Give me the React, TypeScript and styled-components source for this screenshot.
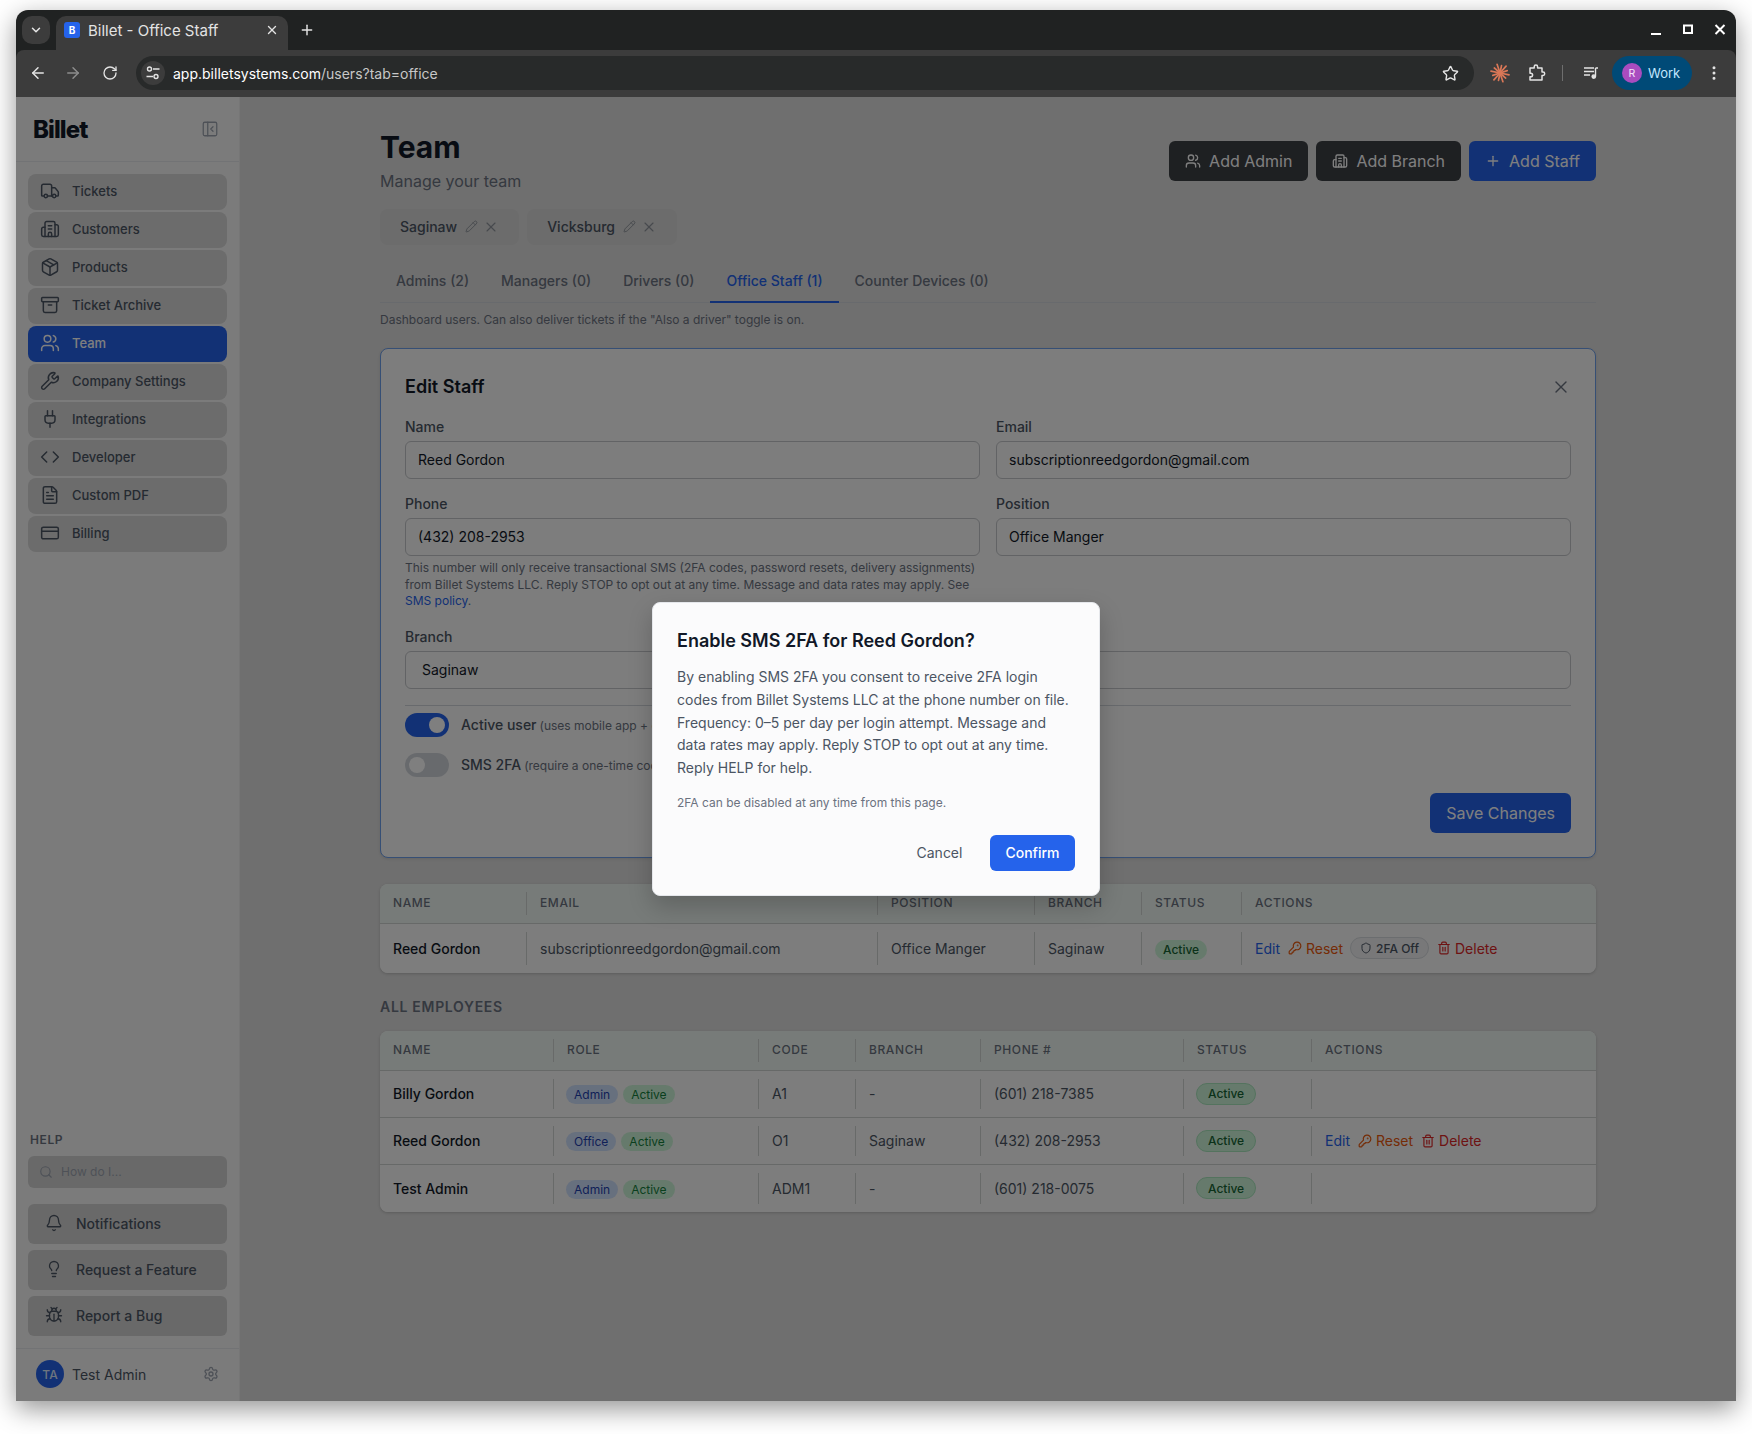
import React from "react";
import styled, { createGlobalStyle } from "styled-components";
import {
  Truck, Building2, Package, Archive, Users, Wrench, Plug, Code, FileText, CreditCard,
  Bell, Lightbulb, Bug, Search, Settings, Pencil, X, Plus, KeyRound, Shield, Trash2,
  PanelLeftClose, ArrowLeft, ArrowRight, RotateCw, Star, ChevronDown, EllipsisVertical,
} from "lucide-react";

const Global = createGlobalStyle`
  html, body { margin: 0; padding: 0; background: #fff; }
  body { font-family: Inter, "Liberation Sans", sans-serif; width: 1752px; height: 1434px; overflow: hidden; }
  * { box-sizing: border-box; }
`;

const Stage = styled.div`
  padding: 10px 16px 33px;
  width: 1752px;
  height: 1434px;
`;
const Win = styled.div`
  width: 1720px;
  height: 1391px;
  display: flex;
  flex-direction: column;
  border-radius: 12px 12px 0 0;
  box-shadow: 0 8px 26px rgba(0, 0, 0, 0.42);
  background: #202222;
  overflow: hidden;
`;
const TabStrip = styled.div`
  height: 40px;
  flex: none;
  display: flex;
  align-items: flex-end;
  padding-left: 6px;
  color: #e3e3e3;
`;
const TabList = styled.div`
  width: 28px;
  height: 28px;
  margin-bottom: 6px;
  border-radius: 10px;
  background: #3c3c3c;
  display: flex;
  align-items: center;
  justify-content: center;
`;
const Tab = styled.div`
  width: 232px;
  height: 34px;
  margin-left: 6px;
  border-radius: 10px 10px 0 0;
  background: #3c3c3c;
  display: flex;
  align-items: center;
  padding: 0 9px 6px 8px;
  font-size: 15px;
`;
const Favicon = styled.span`
  width: 16px;
  height: 16px;
  border-radius: 3px;
  background: #2563eb;
  color: #fff;
  font-size: 10px;
  font-weight: 700;
  display: flex;
  align-items: center;
  justify-content: center;
`;
const TabTitle = styled.span`
  flex: 1;
  margin-left: 8px;
`;
const NewTab = styled.span`
  display: flex;
  margin: 0 0 6px 11px;
  height: 28px;
  align-items: center;
`;
const WinControls = styled.div`
  margin-left: auto;
  height: 40px;
  display: flex;
  align-items: center;
  gap: 16px;
  padding-right: 8px;
`;
const WinBtn = styled.span`
  width: 16px;
  display: flex;
  justify-content: center;
  align-items: center;
`;
const Toolbar = styled.div`
  height: 47px;
  flex: none;
  background: #3c3c3c;
  border-radius: 8px 8px 0 0;
  display: flex;
  align-items: center;
  padding: 0 0 1px 13px;
  color: #e3e3e3;
`;
const NavBtn = styled.span<{ $dim?: boolean; $mr: number }>`
  width: 18px;
  display: flex;
  justify-content: center;
  margin-right: ${(p) => p.$mr}px;
  color: ${(p) => (p.$dim ? "#8c8c8c" : "#e3e3e3")};
`;
const Omnibox = styled.div`
  width: 1338px;
  height: 34px;
  border-radius: 17px;
  background: #282a2a;
  display: flex;
  align-items: center;
  padding: 0 15px 0 5px;
`;
const InfoChip = styled.span`
  width: 24px;
  height: 24px;
  border-radius: 50%;
  background: #3c3c3c;
  display: flex;
  align-items: center;
  justify-content: center;
`;
const Url = styled.span`
  margin-left: 8px;
  flex: 1;
  font-size: 14px;
  color: #fff;
`;
const UrlRest = styled.span`
  color: #c7c7c7;
`;
const ToolIcons = styled.div`
  flex: 1;
  display: flex;
  align-items: center;
`;
const ToolIcon = styled.span<{ $ml: number }>`
  display: flex;
  margin-left: ${(p) => p.$ml}px;
`;
const Sep = styled.span`
  width: 1px;
  height: 16px;
  background: #6e6e6e;
  margin-left: 16px;
`;
const ProfilePill = styled.div`
  margin-left: 13px;
  width: 80px;
  height: 34px;
  border-radius: 17px;
  background: #004a77;
  display: flex;
  align-items: center;
  padding-left: 10px;
  gap: 6px;
  font-size: 13px;
  color: #c2e7ff;
`;
const ProfileDot = styled.span`
  width: 20px;
  height: 20px;
  border-radius: 50%;
  background: #a94cbf;
  color: #f5e3fa;
  font-size: 10.5px;
  display: flex;
  align-items: center;
  justify-content: center;
`;

const Viewport = styled.div`
  position: relative;
  flex: 1;
  min-height: 0;
  display: flex;
  background: #dedede;
`;
const Sidebar = styled.aside`
  width: 224px;
  flex: none;
  background: #f7f7f7;
  border-right: 1px solid #ececec;
  display: flex;
  flex-direction: column;
`;
const SideHead = styled.div`
  height: 65px;
  flex: none;
  border-bottom: 1px solid #e5e7eb;
  display: flex;
  align-items: center;
  justify-content: space-between;
  padding: 0 20px 0 17px;
`;
const Logo = styled.span`
  font-size: 24px;
  font-weight: 800;
  letter-spacing: -0.9px;
  color: #111827;
`;
const SideNav = styled.nav`
  padding: 12px 12px 0;
  display: flex;
  flex-direction: column;
  gap: 2px;
`;
const NavItem = styled.div<{ $active?: boolean }>`
  height: 36px;
  border-radius: 8px;
  display: flex;
  align-items: center;
  gap: 12px;
  padding: 0 0 2px 12px;
  font-size: 13px;
  font-weight: 500;
  background: ${(p) => (p.$active ? "#2563eb" : "#d8d8d8")};
  color: ${(p) => (p.$active ? "#fff" : "#4b5563")};
`;
const HelpBlock = styled.div`
  margin-top: auto;
  padding: 0 12px 12px;
  display: flex;
  flex-direction: column;
`;
const HelpLabel = styled.div`
  font-size: 12px;
  line-height: 16px;
  font-weight: 600;
  letter-spacing: 0.6px;
  color: #6b7280;
  padding-left: 2px;
  margin-bottom: 8px;
`;
const HelpSearch = styled.div`
  height: 32px;
  border-radius: 6px;
  background: #d3d3d3;
  display: flex;
  align-items: center;
  gap: 8px;
  padding: 0 0 1px 11px;
  font-size: 12px;
  color: #9ca3af;
  margin-bottom: 16px;
`;
const HelpButtons = styled.div`
  display: flex;
  flex-direction: column;
  gap: 6px;
`;
const HelpButton = styled.div`
  height: 40px;
  border-radius: 6px;
  background: #d3d3d3;
  display: flex;
  align-items: center;
  gap: 13px;
  padding: 0 0 2px 17px;
  font-size: 14px;
  font-weight: 500;
  color: #4b5563;
`;
const UserRow = styled.div`
  height: 53px;
  flex: none;
  border-top: 1px solid #e5e7eb;
  display: flex;
  align-items: center;
  padding: 0 20px 2px 20px;
  font-size: 14px;
  color: #4b5563;
`;
const Avatar = styled.span`
  width: 28px;
  height: 28px;
  border-radius: 50%;
  background: #2563eb;
  color: #dbeafe;
  font-size: 12px;
  font-weight: 500;
  display: flex;
  align-items: center;
  justify-content: center;
  margin-right: 8px;
`;
const UserName = styled.span`
  flex: 1;
`;

const Main = styled.main`
  flex: 1;
  min-width: 0;
  padding-top: 32px;
`;
const Content = styled.div`
  width: 1216px;
  margin: 0 auto;
`;
const PageHead = styled.header`
  display: flex;
  align-items: center;
  justify-content: space-between;
  margin-bottom: 16px;
`;
const Title = styled.h1`
  margin: 0;
  font-size: 30px;
  line-height: 36px;
  font-weight: 700;
  color: #111827;
`;
const Subtitle = styled.p`
  margin: 4px 0 0;
  font-size: 16px;
  line-height: 24px;
  color: #6b7280;
`;
const HeadButtons = styled.div`
  display: flex;
  gap: 8px;
`;
const HeadButton = styled.button<{ $primary?: boolean }>`
  height: 40px;
  border: 0;
  border-radius: 6px;
  padding: 0 16px;
  display: flex;
  align-items: center;
  gap: 8px;
  font: 400 16px Inter, sans-serif;
  color: #fff;
  background: ${(p) => (p.$primary ? "#2563eb" : "#3d4045")};
`;
const Chips = styled.div`
  display: flex;
  gap: 8px;
  margin-bottom: 14px;
`;
const Chip = styled.div`
  height: 36px;
  border-radius: 8px;
  background: #d8d8d8;
  display: flex;
  align-items: center;
  padding: 0 20px 1px 20px;
  font-size: 14px;
  font-weight: 500;
  color: #4b5563;
`;
const ChipTools = styled.span`
  display: flex;
  align-items: center;
  gap: 5px;
  margin-left: 8px;
  color: #8e939b;
`;
const TabsRow = styled.div`
  display: flex;
  border-bottom: 1px solid #d1d5db;
`;
const PageTab = styled.div<{ $active?: boolean }>`
  padding: 12px 16px 10px;
  font-size: 14px;
  line-height: 20px;
  font-weight: 500;
  margin-bottom: -1px;
  border-bottom: 2px solid ${(p) => (p.$active ? "#2563eb" : "transparent")};
  color: ${(p) => (p.$active ? "#2563eb" : "#6b7280")};
`;
const TabHint = styled.p`
  margin: 9px 0 20px;
  font-size: 12px;
  line-height: 16px;
  color: #6b7280;
`;
const EditCard = styled.section`
  position: relative;
  height: 510px;
  border: 1px solid #6d9eea;
  border-radius: 8px;
  background: #fafafa;
  padding: 24px;
  box-shadow: 0 1px 3px rgba(0, 0, 0, 0.1);
`;
const CardHead = styled.div`
  display: flex;
  align-items: center;
  justify-content: space-between;
  margin-bottom: 16px;
  color: #6b7280;
`;
const CardTitle = styled.h2`
  margin: 0;
  font-size: 18px;
  line-height: 28px;
  font-weight: 600;
  color: #111827;
`;
const FormGrid = styled.div`
  display: grid;
  grid-template-columns: 1fr 1fr;
  gap: 15px 16px;
`;
const Field = styled.label`
  display: block;
`;
const FieldLabel = styled.span`
  display: block;
  font-size: 14px;
  line-height: 20px;
  font-weight: 500;
  color: #4b5563;
  margin-bottom: 4px;
`;
const TextBox = styled.div<{ $pad?: number }>`
  height: 38px;
  border: 1px solid #c4c6ca;
  border-radius: 6px;
  display: flex;
  align-items: center;
  padding: 0 0 1px ${(p) => p.$pad ?? 12}px;
  font-size: 14px;
  color: #111827;
`;
const FieldNote = styled.p`
  margin: 4px 0 2.5px;
  font-size: 12px;
  line-height: 16.5px;
  color: #6b7280;
`;
const NoteLink = styled.span`
  color: #2563eb;
`;
const FormRule = styled.div`
  height: 1px;
  background: #d1d5db;
  margin: 16px 0 7px;
`;
const ToggleRow = styled.div`
  display: flex;
  align-items: center;
  gap: 12px;
  height: 24px;
  margin-bottom: 16px;
`;
const Toggle = styled.span<{ $on?: boolean }>`
  width: 44px;
  height: 24px;
  border-radius: 12px;
  background: ${(p) => (p.$on ? "#2563eb" : "#d1d5db")};
  display: flex;
  align-items: center;
  padding: 0 4px;
  justify-content: ${(p) => (p.$on ? "flex-end" : "flex-start")};
`;
const Knob = styled.span`
  width: 16px;
  height: 16px;
  border-radius: 50%;
  background: #fff;
`;
const ToggleText = styled.span`
  font-size: 14px;
  font-weight: 500;
  color: #4b5563;
  margin-bottom: 2px;
`;
const ToggleSmall = styled.span`
  font-size: 12px;
  font-weight: 400;
  color: #6b7280;
  margin-left: 3px;
`;
const SaveRow = styled.div`
  display: flex;
  justify-content: flex-end;
`;
const TableCard = styled.div<{ $mt: number }>`
  margin-top: ${(p) => p.$mt}px;
  border-radius: 8px;
  background: #fafafa;
  box-shadow: 0 1px 3px rgba(0, 0, 0, 0.18);
  overflow: hidden;
`;
const SectionLabel = styled.h3`
  margin: 24px 0 0;
  font-size: 14px;
  line-height: 20px;
  font-weight: 600;
  letter-spacing: 0.7px;
  color: #6b7280;
`;
const Row = styled.div<{ $cols: string; $h: number; $head?: boolean }>`
  display: grid;
  grid-template-columns: ${(p) => p.$cols};
  height: ${(p) => p.$h}px;
  background: ${(p) => (p.$head ? "#eff7f3" : "#fafafa")};
  border-bottom: 1px solid #cfd2d0;
  &:last-child {
    border-bottom: 0;
  }
`;
const Cell = styled.div<{ $head?: boolean; $last?: boolean; $strong?: boolean }>`
  position: relative;
  display: flex;
  align-items: center;
  padding: 0 12px ${(p) => (p.$head ? 3 : 1)}px 13px;
  gap: 5px;
  font-size: ${(p) => (p.$head ? 12 : 14)}px;
  font-weight: ${(p) => (p.$head || p.$strong ? 500 : 400)};
  letter-spacing: ${(p) => (p.$head ? "0.6px" : "0")};
  color: ${(p) => (p.$strong ? "#111827" : p.$head ? "#6b7280" : "#4b5563")};
  &::after {
    content: "";
    display: ${(p) => (p.$last ? "none" : "block")};
    position: absolute;
    right: 0;
    top: 8px;
    bottom: 8px;
    width: 1px;
    background: #d1d5d3;
  }
`;
const RolePill = styled.span<{ $tone: "blue" | "green" }>`
  height: 19px;
  margin-top: 2px;
  border-radius: 10px;
  padding: 0 8px;
  display: flex;
  align-items: center;
  font-size: 12px;
  background: ${(p) => (p.$tone === "blue" ? "#cfe0fc" : "#cdf5d8")};
  color: ${(p) => (p.$tone === "blue" ? "#1e40af" : "#15803d")};
  &:first-child {
    margin-left: -1px;
  }
`;
const PlainStatus = styled.span`
  height: 20px;
  margin-top: 3px;
  border-radius: 10px;
  padding: 0 8px;
  display: flex;
  align-items: center;
  font-size: 12px;
  font-weight: 500;
  background: #cdf5d8;
  color: #166534;
`;
const StatusPill = styled.span`
  height: 22px;
  margin-left: -1px;
  border-radius: 11px;
  border: 1px solid #a8e6bd;
  padding: 0 11px;
  display: flex;
  align-items: center;
  font-size: 12px;
  font-weight: 500;
  background: #cdf5d8;
  color: #166534;
`;
const Actions = styled.div`
  display: flex;
  align-items: center;
  gap: 8px;
`;
const ActionLink = styled.span<{ $color: string }>`
  display: flex;
  align-items: center;
  gap: 4px;
  color: ${(p) => p.$color};
`;
const TwoFaPill = styled.span`
  height: 22px;
  margin-left: -1px;
  border-radius: 11px;
  border: 1px solid #d7dade;
  background: #f0f1f3;
  padding: 0 9px;
  display: flex;
  align-items: center;
  gap: 4px;
  font-size: 12px;
  font-weight: 500;
  color: #4b5563;
`;

const Backdrop = styled.div`
  position: absolute;
  inset: 0;
  background: rgba(0, 0, 0, 0.5);
  display: flex;
  align-items: center;
  justify-content: center;
`;
const Dialog = styled.div`
  width: 448px;
  height: 294px;
  border-radius: 8px;
  border: 1px solid #e5e7eb;
  background: #fbfbfc;
  padding: 24px;
  box-shadow: 0 10px 25px rgba(0, 0, 0, 0.2);
`;
const DialogTitle = styled.h2`
  margin: 0 0 11px;
  font-size: 18px;
  line-height: 28px;
  font-weight: 600;
  color: #111827;
`;
const DialogBody = styled.p`
  margin: 0 0 13px;
  font-size: 14px;
  line-height: 22.75px;
  color: #4b5563;
`;
const DialogNote = styled.p`
  margin: 0 0 23px;
  font-size: 12px;
  line-height: 19.5px;
  color: #6b7280;
`;
const DialogActions = styled.div`
  display: flex;
  justify-content: flex-end;
  gap: 12px;
`;
const DialogButton = styled.button<{ $primary?: boolean }>`
  height: 36px;
  border: 0;
  border-radius: 6px;
  padding: 0 15.5px 2px;
  font: ${(p) => (p.$primary ? 500 : 400)} 14px Inter, sans-serif;
  background: ${(p) => (p.$primary ? "#2563eb" : "transparent")};
  color: ${(p) => (p.$primary ? "#fff" : "#4b5563")};
`;

const navItems: [string, any][] = [
  ["Tickets", Truck], ["Customers", Building2], ["Products", Package], ["Ticket Archive", Archive],
  ["Team", Users], ["Company Settings", Wrench], ["Integrations", Plug], ["Developer", Code],
  ["Custom PDF", FileText], ["Billing", CreditCard],
];
const staffCols = "147px 351px 157px 107px 100px 1fr";
const allCols = "174px 205px 97px 125px 203px 128px 1fr";
const employees = [
  { name: "Billy Gordon", role: "Admin", code: "A1", branch: "-", phone: "(601) 218-7385", actions: false },
  { name: "Reed Gordon", role: "Office", code: "O1", branch: "Saginaw", phone: "(432) 208-2953", actions: true },
  { name: "Test Admin", role: "Admin", code: "ADM1", branch: "-", phone: "(601) 218-0075", actions: false },
];

const TuneIcon = () => (
  <svg width="16" height="16" viewBox="0 0 16 16" fill="none" stroke="#e3e3e3" strokeWidth="1.4">
    <circle cx="4.5" cy="4" r="2" /><path d="M8 4h6.5M1.5 11.5H8" /><circle cx="11" cy="11.5" r="2" />
  </svg>
);
const BurstIcon = () => (
  <svg width="20" height="20" viewBox="0 0 20 20" stroke="#d97757" strokeWidth="1.7" strokeLinecap="round">
    {Array.from({ length: 12 }).map((_, i) => {
      const a = (i * Math.PI * 2) / 12 + 0.2;
      const r = i % 2 ? 7.6 : 9.2;
      return <line key={i} x1={10} y1={10} x2={10 + r * Math.cos(a)} y2={10 + r * Math.sin(a)} />;
    })}
  </svg>
);
const PuzzleIcon = () => (
  <svg width="18" height="18" viewBox="0 0 18 18" fill="none" stroke="#e3e3e3" strokeWidth="1.5" strokeLinejoin="round">
    <path d="M2 4h4.2V2.8a1.7 1.7 0 0 1 3.4 0V4H14v4h1a1.7 1.7 0 0 1 0 3.4h-1V16H2v-3.2h.8a1.8 1.8 0 0 0 0-3.6H2z" />
  </svg>
);
const MediaIcon = () => (
  <svg width="16" height="16" viewBox="0 0 16 16" fill="none" stroke="#e3e3e3" strokeWidth="1.4">
    <path d="M1 3h10M1 6.5h10M1 10h6" /><path d="M12.5 3v8.2" /><circle cx="10.8" cy="11.6" r="1.7" fill="#e3e3e3" /><path d="M12.5 3H15" />
  </svg>
);
const MinimizeGlyph = () => (
  <svg width="16" height="16" viewBox="0 0 16 16" stroke="#fff" strokeWidth="2"><path d="M3 12h10" /></svg>
);
const MaximizeGlyph = () => (
  <svg width="16" height="16" viewBox="0 0 16 16" fill="none" stroke="#fff" strokeWidth="2"><rect x="4" y="3.5" width="8" height="7.5" /></svg>
);
const CloseGlyph = () => (
  <svg width="16" height="16" viewBox="0 0 16 16" stroke="#fff" strokeWidth="2"><path d="M3.5 3l9 9M12.5 3l-9 9" /></svg>
);

export default function App() {
  return (
    <Stage>
      <Global />
      <Win>
        <TabStrip>
          <TabList><ChevronDown size={14} strokeWidth={2.6} /></TabList>
          <Tab>
            <Favicon>B</Favicon>
            <TabTitle>Billet - Office Staff</TabTitle>
            <X size={14} strokeWidth={2.4} />
          </Tab>
          <NewTab><Plus size={16} strokeWidth={2.2} /></NewTab>
          <WinControls>
            <WinBtn><MinimizeGlyph /></WinBtn>
            <WinBtn><MaximizeGlyph /></WinBtn>
            <WinBtn><CloseGlyph /></WinBtn>
          </WinControls>
        </TabStrip>
        <Toolbar>
          <NavBtn $mr={17}><ArrowLeft size={18} /></NavBtn>
          <NavBtn $dim $mr={19}><ArrowRight size={18} /></NavBtn>
          <NavBtn $mr={17}><RotateCw size={16} /></NavBtn>
          <Omnibox>
            <InfoChip><TuneIcon /></InfoChip>
            <Url>app.billetsystems.com<UrlRest>/users?tab=office</UrlRest></Url>
            <Star size={17} strokeWidth={2} />
          </Omnibox>
          <ToolIcons>
            <ToolIcon $ml={16}><BurstIcon /></ToolIcon>
            <ToolIcon $ml={18}><PuzzleIcon /></ToolIcon>
            <Sep />
            <ToolIcon $ml={20}><MediaIcon /></ToolIcon>
            <ProfilePill>
              <ProfileDot>R</ProfileDot>
              Work
            </ProfilePill>
            <ToolIcon $ml={13}><EllipsisVertical size={18} /></ToolIcon>
          </ToolIcons>
        </Toolbar>
        <Viewport>
          <Sidebar>
            <SideHead>
              <Logo>Billet</Logo>
              <PanelLeftClose size={18} strokeWidth={1.7} color="#9ca3af" />
            </SideHead>
            <SideNav>
              {navItems.map(([label, Icon]) => (
                <NavItem key={label} $active={label === "Team"}>
                  <Icon size={20} strokeWidth={1.8} />
                  {label}
                </NavItem>
              ))}
            </SideNav>
            <HelpBlock>
              <HelpLabel>HELP</HelpLabel>
              <HelpSearch><Search size={14} />How do I...</HelpSearch>
              <HelpButtons>
                <HelpButton><Bell size={18} strokeWidth={1.8} />Notifications</HelpButton>
                <HelpButton><Lightbulb size={18} strokeWidth={1.8} />Request a Feature</HelpButton>
                <HelpButton><Bug size={18} strokeWidth={1.8} />Report a Bug</HelpButton>
              </HelpButtons>
            </HelpBlock>
            <UserRow>
              <Avatar>TA</Avatar>
              <UserName>Test Admin</UserName>
              <Settings size={16} color="#9ca3af" />
            </UserRow>
          </Sidebar>
          <Main>
            <Content>
              <PageHead>
                <div>
                  <Title>Team</Title>
                  <Subtitle>Manage your team</Subtitle>
                </div>
                <HeadButtons>
                  <HeadButton><Users size={16} />Add Admin</HeadButton>
                  <HeadButton><Building2 size={16} />Add Branch</HeadButton>
                  <HeadButton $primary><Plus size={16} />Add Staff</HeadButton>
                </HeadButtons>
              </PageHead>
              <Chips>
                {["Saginaw", "Vicksburg"].map((b) => (
                  <Chip key={b}>
                    {b}
                    <ChipTools><Pencil size={13} strokeWidth={1.7} /><X size={16} strokeWidth={1.6} /></ChipTools>
                  </Chip>
                ))}
              </Chips>
              <TabsRow>
                <PageTab>Admins (2)</PageTab>
                <PageTab>Managers (0)</PageTab>
                <PageTab>Drivers (0)</PageTab>
                <PageTab $active>Office Staff (1)</PageTab>
                <PageTab>Counter Devices (0)</PageTab>
              </TabsRow>
              <TabHint>Dashboard users. Can also deliver tickets if the "Also a driver" toggle is on.</TabHint>
              <EditCard>
                <CardHead>
                  <CardTitle>Edit Staff</CardTitle>
                  <X size={20} strokeWidth={1.6} />
                </CardHead>
                <FormGrid>
                  <Field><FieldLabel>Name</FieldLabel><TextBox>Reed Gordon</TextBox></Field>
                  <Field><FieldLabel>Email</FieldLabel><TextBox>subscriptionreedgordon@gmail.com</TextBox></Field>
                  <Field>
                    <FieldLabel>Phone</FieldLabel>
                    <TextBox>(432) 208-2953</TextBox>
                    <FieldNote>
                      This number will only receive transactional SMS (2FA codes, password resets, delivery assignments) from Billet Systems LLC. Reply STOP to opt out at any time. Message and data rates may apply. See <NoteLink>SMS policy</NoteLink>.
                    </FieldNote>
                  </Field>
                  <Field><FieldLabel>Position</FieldLabel><TextBox>Office Manger</TextBox></Field>
                  <Field><FieldLabel>Branch</FieldLabel><TextBox $pad={16}>Saginaw</TextBox></Field>
                  <Field><FieldLabel>&nbsp;</FieldLabel><TextBox /></Field>
                </FormGrid>
                <FormRule />
                <ToggleRow>
                  <Toggle $on><Knob /></Toggle>
                  <ToggleText>Active user<ToggleSmall>(uses mobile app + dashboard)</ToggleSmall></ToggleText>
                </ToggleRow>
                <ToggleRow>
                  <Toggle><Knob /></Toggle>
                  <ToggleText>SMS 2FA<ToggleSmall>(require a one-time code at login)</ToggleSmall></ToggleText>
                </ToggleRow>
                <SaveRow><HeadButton $primary>Save Changes</HeadButton></SaveRow>
              </EditCard>
              <TableCard $mt={26}>
                <Row $cols={staffCols} $h={40} $head>
                  {["NAME", "EMAIL", "POSITION", "BRANCH", "STATUS", "ACTIONS"].map((h, i) => (
                    <Cell key={h} $head $last={i === 5}>{h}</Cell>
                  ))}
                </Row>
                <Row $cols={staffCols} $h={49}>
                  <Cell $strong>Reed Gordon</Cell>
                  <Cell>subscriptionreedgordon@gmail.com</Cell>
                  <Cell>Office Manger</Cell>
                  <Cell>Saginaw</Cell>
                  <Cell><PlainStatus>Active</PlainStatus></Cell>
                  <Cell $last>
                    <Actions>
                      <ActionLink $color="#2563eb">Edit</ActionLink>
                      <ActionLink $color="#ea580c"><KeyRound size={14} />Reset</ActionLink>
                      <TwoFaPill><Shield size={12} />2FA Off</TwoFaPill>
                      <ActionLink $color="#dc2626"><Trash2 size={14} />Delete</ActionLink>
                    </Actions>
                  </Cell>
                </Row>
              </TableCard>
              <SectionLabel>ALL EMPLOYEES</SectionLabel>
              <TableCard $mt={14}>
                <Row $cols={allCols} $h={40} $head>
                  {["NAME", "ROLE", "CODE", "BRANCH", "PHONE #", "STATUS", "ACTIONS"].map((h, i) => (
                    <Cell key={h} $head $last={i === 6}>{h}</Cell>
                  ))}
                </Row>
                {employees.map((e) => (
                  <Row key={e.name} $cols={allCols} $h={47}>
                    <Cell $strong>{e.name}</Cell>
                    <Cell>
                      <RolePill $tone="blue">{e.role}</RolePill>
                      <RolePill $tone="green">Active</RolePill>
                    </Cell>
                    <Cell>{e.code}</Cell>
                    <Cell>{e.branch}</Cell>
                    <Cell>{e.phone}</Cell>
                    <Cell><StatusPill>Active</StatusPill></Cell>
                    <Cell $last>
                      {e.actions && (
                        <Actions>
                          <ActionLink $color="#2563eb">Edit</ActionLink>
                          <ActionLink $color="#ea580c"><KeyRound size={14} />Reset</ActionLink>
                          <ActionLink $color="#dc2626"><Trash2 size={14} />Delete</ActionLink>
                        </Actions>
                      )}
                    </Cell>
                  </Row>
                ))}
              </TableCard>
            </Content>
          </Main>
          <Backdrop>
            <Dialog>
              <DialogTitle>Enable SMS 2FA for Reed Gordon?</DialogTitle>
              <DialogBody>
                By enabling SMS 2FA you consent to receive 2FA login codes from Billet Systems LLC at the phone number on file. Frequency: 0–5 per day per login attempt. Message and data rates may apply. Reply STOP to opt out at any time. Reply HELP for help.
              </DialogBody>
              <DialogNote>2FA can be disabled at any time from this page.</DialogNote>
              <DialogActions>
                <DialogButton>Cancel</DialogButton>
                <DialogButton $primary>Confirm</DialogButton>
              </DialogActions>
            </Dialog>
          </Backdrop>
        </Viewport>
      </Win>
    </Stage>
  );
}
